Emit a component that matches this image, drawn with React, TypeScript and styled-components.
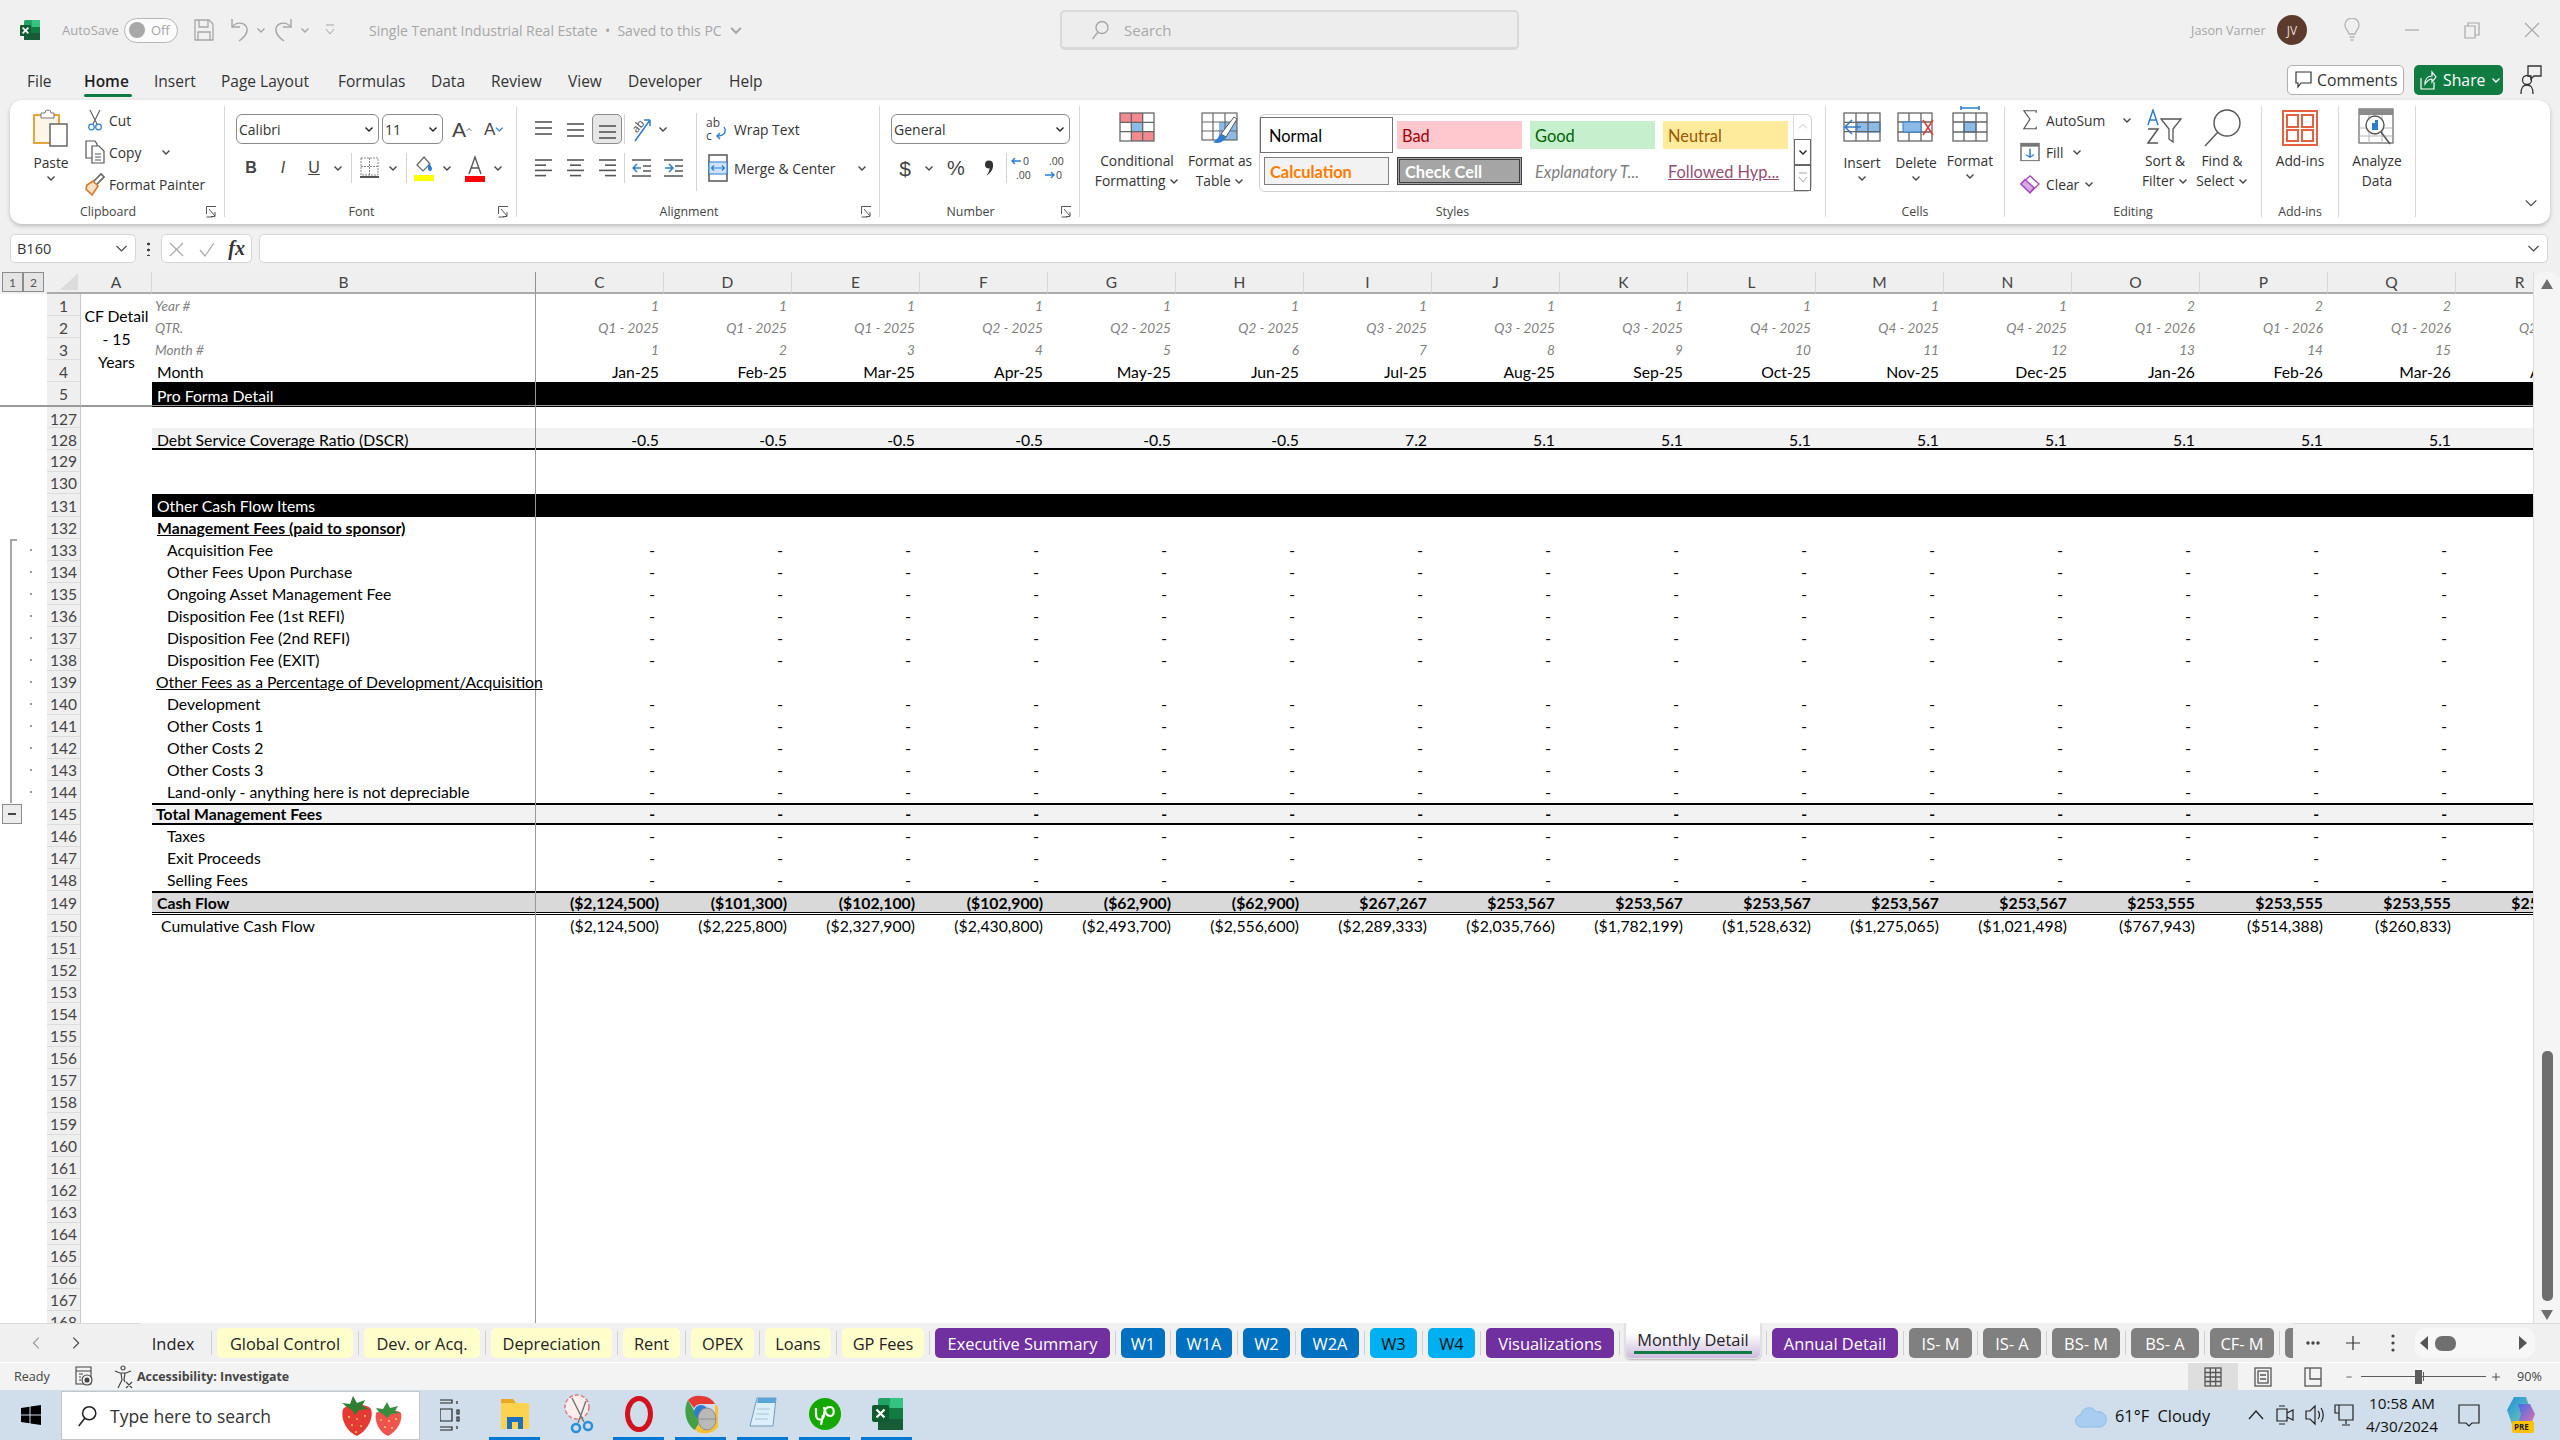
import React from 'react';
import styled, { createGlobalStyle } from 'styled-components';

const UI_FONT = '"Open Sans", "Noto Sans", sans-serif';
const CELL_FONT = 'Lato, "Liberation Sans", sans-serif';

const GlobalStyle = createGlobalStyle`
  html, body { margin: 0; padding: 0; background: #f0f0f0; overflow: hidden; }
  #root { width: 2560px; height: 1440px; }
  * { box-sizing: border-box; }
`;

const Page = styled.div`
  width: 2560px;
  height: 1440px;
  display: flex;
  flex-direction: column;
  background: #f0f0f0;
  font-family: ${UI_FONT};
  color: #333;
  overflow: hidden;
`;

/* ---------- title bar ---------- */
const TitleBar = styled.header`
  height: 60px;
  flex: none;
  display: flex;
  align-items: center;
  color: #a6a6a6;
`;
const TitleLeft = styled.div`
  flex: 0 0 1060px;
  display: flex;
  align-items: center;
`;
const Slot = styled.div<{ $w: number; $ml?: number; $box?: boolean; $h?: number; $left?: boolean }>`
  flex: none;
  width: ${p => p.$w}px;
  height: ${p => (p.$h ? `${p.$h}px` : '100%')};
  margin-left: ${p => p.$ml || 0}px;
  display: flex;
  align-items: center;
  justify-content: ${p => (p.$left ? 'flex-start' : 'center')};
  ${p => p.$box && 'border: 1px solid #8c8c8c; border-radius: 5px; background: #e6e6e6;'}
`;
const AutoSave = styled.span`
  font-size: 13px;
  margin-left: 21px;
  width: 54px;
  white-space: nowrap;
`;
const Toggle = styled.div`
  width: 54px;
  height: 25px;
  margin-left: 8px;
  border: 1.5px solid #b5b5b5;
  border-radius: 13px;
  background: #fbfbfb;
  display: flex;
  align-items: center;
  padding-left: 4px;
  gap: 6px;
  font-size: 13px;
  &::before {
    content: '';
    width: 16px;
    height: 16px;
    border-radius: 50%;
    background: #a8a8a8;
  }
`;
const DocTitle = styled.span`
  margin-left: 33px;
  font-size: 14px;
  white-space: nowrap;
  width: 360px;
`;
const SearchBox = styled.div`
  flex: 0 0 459px;
  height: 40px;
  border: 2px solid #d9d9d9;
  border-bottom-width: 3px;
  border-radius: 5px;
  background: #ededed;
  display: flex;
  align-items: center;
  padding-left: 28px;
  gap: 14px;
  font-size: 15px;
  color: #a9a9a9;
`;
const TitleRight = styled.div`
  flex: 1;
  display: flex;
  align-items: center;
  height: 100%;
`;
const UserName = styled.span`
  margin-left: 672px;
  width: 76px;
  font-size: 12.6px;
  white-space: nowrap;
`;
const Avatar = styled.div`
  width: 30px;
  height: 30px;
  margin-left: 10px;
  border-radius: 50%;
  background: #5c3a2c;
  color: #e6dcd6;
  font-size: 12px;
  display: flex;
  align-items: center;
  justify-content: center;
`;

/* ---------- menu ---------- */
const MenuBar = styled.nav`
  height: 40px;
  flex: none;
  display: flex;
  align-items: center;
  padding-left: 27px;
`;
const MenuItem = styled.div<{ $w: number; $active?: boolean }>`
  flex: none;
  width: ${p => p.$w}px;
  height: 40px;
  font-size: 15.5px;
  line-height: 42px;
  color: ${p => (p.$active ? '#1f1f1f' : '#333')};
  font-weight: ${p => (p.$active ? 600 : 400)};
  white-space: nowrap;
  position: relative;
  ${p =>
    p.$active &&
    `&::after { content: ''; position: absolute; left: 0; bottom: 3px; width: 48px; height: 3px; background: #107c41; border-radius: 2px; }`}
`;
const CommentsBtn = styled.div`
  margin-left: 1518px;
  width: 117px;
  height: 30px;
  border: 1px solid #b0b0b0;
  border-radius: 5px;
  background: #fff;
  display: flex;
  align-items: center;
  gap: 5px;
  padding-left: 7px;
  font-size: 15.8px;
`;
const ShareBtn = styled.div`
  margin-left: 10px;
  width: 89px;
  height: 30px;
  border-radius: 5px;
  background: #107c41;
  color: #fff;
  display: flex;
  align-items: center;
  gap: 6px;
  padding-left: 6px;
  font-size: 15.8px;
`;

/* ---------- ribbon ---------- */
const Ribbon = styled.section`
  flex: none;
  margin-left: 10px;
  width: 2540px;
  height: 124px;
  background: #fff;
  border-radius: 12px;
  box-shadow: 0 2px 4px rgba(0, 0, 0, 0.22);
  display: flex;
  align-items: flex-start;
  padding-top: 6px;
  font-size: 13.8px;
`;
const Group = styled.div<{ $w: number }>`
  flex: none;
  width: ${p => p.$w}px;
  height: 111px;
  display: flex;
  flex-direction: column;
  border-right: 1px solid #d9d9d9;
`;
const GroupBody = styled.div`
  flex: 1;
  display: flex;
  min-height: 0;
`;
const GroupLabel = styled.div<{ $launcher?: boolean }>`
  flex: none;
  height: 18px;
  display: grid;
  grid-template-columns: ${p => (p.$launcher ? '1fr auto 1fr 18px' : '1fr auto 1fr')};
  align-items: center;
  padding-top: 4px;
  font-size: 12.4px;
  color: #444;
  white-space: nowrap;
`;
const Large = styled.div<{ $w: number; $ml?: number }>`
  flex: none;
  width: ${p => p.$w}px;
  margin-left: ${p => p.$ml || 0}px;
  display: flex;
  flex-direction: column;
  align-items: center;
  line-height: 20px;
  text-align: center;
  white-space: nowrap;
`;
const LargeIcon = styled.div<{ $h: number }>`
  height: ${p => p.$h}px;
  display: flex;
  align-items: flex-end;
  justify-content: center;
`;
const LargeText = styled.div<{ $mt: number }>`
  margin-top: ${p => p.$mt}px;
`;
const SmallColumn = styled.div<{ $w: number; $ml?: number }>`
  flex: none;
  width: ${p => p.$w}px;
  margin-left: ${p => p.$ml || 0}px;
  display: flex;
  flex-direction: column;
  gap: 4px;
`;
const SmallRow = styled.div`
  height: 28px;
  display: flex;
  align-items: center;
  white-space: nowrap;
`;
const RowsBlock = styled.div<{ $w?: number }>`
  flex: ${p => (p.$w ? 'none' : 1)};
  width: ${p => (p.$w ? `${p.$w}px` : 'auto')};
  display: flex;
  flex-direction: column;
  gap: 9px;
  padding-top: 8px;
`;
const ToolRow = styled.div`
  height: 30px;
  display: flex;
  align-items: center;
  white-space: nowrap;
`;
const Select = styled.div<{ $w: number; $ml?: number; $size?: number }>`
  flex: none;
  width: ${p => p.$w}px;
  height: 30px;
  margin-left: ${p => p.$ml || 0}px;
  border: 1px solid #8a8a8a;
  border-radius: 6px;
  display: flex;
  align-items: center;
  justify-content: space-between;
  padding: 0 4px 0 2px;
  font-size: ${p => p.$size || 14}px;
`;
const VSep = styled.div<{ $ml?: number; $h?: number }>`
  flex: none;
  width: 1px;
  height: ${p => p.$h || 30}px;
  margin-left: ${p => p.$ml || 0}px;
  background: #d4d4d4;
`;
const TallSep = styled.div`
  flex: none;
  width: 1px;
  height: 78px;
  margin-top: 7px;
  background: #d4d4d4;
`;
const BigGlyph = styled.span<{ $size: number; $bold?: boolean; $italic?: boolean; $color?: string; $line?: string }>`
  font-size: ${p => p.$size}px;
  font-weight: ${p => (p.$bold ? 700 : 400)};
  font-style: ${p => (p.$italic ? 'italic' : 'normal')};
  color: ${p => p.$color || '#444'};
  text-decoration: ${p => p.$line || 'none'};
  font-family: "Liberation Sans", sans-serif;
  line-height: 1;
`;
const Gallery = styled.div`
  flex: none;
  width: 553px;
  height: 78px;
  margin: 8px 0 0 4px;
  border: 1px solid #cfcfcf;
  border-radius: 6px;
  display: flex;
  padding: 6px 0 0 4px;
`;
const StyleGrid = styled.div`
  display: grid;
  grid-template-columns: repeat(4, 125px);
  grid-auto-rows: 28px;
  gap: 8px;
`;
const StyleCell = styled.div<{ $bg?: string; $fg?: string; $bold?: boolean; $italic?: boolean; $under?: boolean; $border?: string }>`
  display: flex;
  align-items: center;
  padding-left: 5px;
  font-family: ${CELL_FONT};
  font-size: 16.4px;
  white-space: nowrap;
  background: ${p => p.$bg || 'transparent'};
  color: ${p => p.$fg || '#000'};
  font-weight: ${p => (p.$bold ? 700 : 400)};
  font-style: ${p => (p.$italic ? 'italic' : 'normal')};
  text-decoration: ${p => (p.$under ? 'underline' : 'none')};
  border: ${p => p.$border || 'none'};
`;
const NormalCell = styled(StyleCell)`
  box-shadow: 0 0 0 3px #fff, 0 0 0 4px #707070;
`;
const GalleryScroll = styled.div`
  margin: -6px 0 0 5px;
  width: 19px;
  display: flex;
  flex-direction: column;
  border-left: 1px solid #dcdcdc;
`;
const GalleryBtn = styled.div<{ $strong?: boolean }>`
  flex: 1;
  display: flex;
  align-items: center;
  justify-content: center;
  ${p => p.$strong && 'border: 1px solid #666; border-right: 1px solid #666; background: #fff;'}
`;
const CollapseCell = styled.div`
  flex: 1;
  height: 111px;
  display: flex;
  align-items: flex-end;
  justify-content: flex-end;
  padding: 0 11px 6px 0;
`;

/* ---------- formula bar ---------- */
const FormulaBar = styled.div`
  flex: none;
  height: 29px;
  margin-top: 10px;
  padding-left: 10px;
  display: flex;
  align-items: center;
`;
const FormulaBox = styled.div<{ $w: number; $ml?: number; $end?: boolean }>`
  flex: none;
  width: ${p => p.$w}px;
  height: 29px;
  margin-left: ${p => p.$ml || 0}px;
  background: #fff;
  border: 1px solid #d6d6d6;
  border-radius: 5px;
  display: flex;
  align-items: center;
  justify-content: ${p => (p.$end ? 'flex-end' : 'space-between')};
  padding: 0 6px;
  font-size: 14.5px;
`;
const FxMark = styled.span`
  font-family: "Liberation Serif", serif;
  font-style: italic;
  font-size: 20px;
  font-weight: 700;
  color: #333;
`;
const DotsV = styled.div`
  width: 3px;
  height: 15px;
  margin-left: 11px;
  background: radial-gradient(circle, #444 1.4px, transparent 1.6px) 0 0 / 3px 6px;
`;

/* ---------- sheet ---------- */
const SheetArea = styled.div`
  flex: none;
  height: 1051px;
  margin-top: 9px;
  display: flex;
`;
const SheetMain = styled.div`
  width: 2534px;
  flex: none;
  display: flex;
  flex-direction: column;
  overflow: hidden;
  background: #fff;
  border-right: 1px solid #dedede;
`;
const HeaderRow = styled.div`
  flex: none;
  height: 22px;
  display: flex;
  background: #fff;
`;
const OutlineBtns = styled.div`
  flex: none;
  width: 47px;
  display: flex;
  padding-left: 2px;
  background: #f0f0f0;
`;
const OutlineBtn = styled.div`
  width: 21px;
  height: 20px;
  border: 1px solid #8c8c8c;
  background: #e4e4e4;
  display: flex;
  align-items: center;
  justify-content: center;
  font-family: ${CELL_FONT};
  font-size: 12px;
  color: #555;
`;
const Corner = styled.div`
  flex: none;
  width: 34px;
  background: #efefef;
  border-bottom: 2px solid #ababab;
  display: flex;
  align-items: flex-end;
  justify-content: flex-end;
  padding: 0 3px 2px 0;
`;
const ColHead = styled.div<{ $w: number; $dark?: boolean }>`
  flex: none;
  width: ${p => p.$w}px;
  background: #efefef;
  border-bottom: 2px solid #ababab;
  border-right: 1px solid ${p => (p.$dark ? '#8f8f8f' : '#d6d6d6')};
  display: flex;
  align-items: center;
  justify-content: center;
  font-family: ${CELL_FONT};
  font-size: 15.5px;
  color: #444;
`;
const SheetGrid = styled.div<{ $rows: string }>`
  flex: 1;
  min-height: 0;
  overflow: hidden;
  display: grid;
  grid-template-columns: 47px 34px 71px 384px repeat(16, 128px);
  grid-template-rows: ${p => p.$rows};
  font-family: ${CELL_FONT};
  font-size: 15.75px;
  color: #000;
`;
const Gutter = styled.div<{ $rule?: boolean }>`
  background: #fff;
  display: flex;
  padding-left: 10px;
  ${p => p.$rule && 'border-bottom: 2px solid #9a9a9a;'}
`;
const Bracket = styled.div<{ $first?: boolean }>`
  flex: 1;
  border-left: 2px solid #a6a6a6;
  ${p => p.$first && 'background: linear-gradient(#a6a6a6, #a6a6a6) 0 0 / 5px 2px no-repeat;'}
  display: flex;
  align-items: center;
  padding-left: 18px;
  &::after {
    content: '';
    width: 2px;
    height: 2px;
    background: #9a9a9a;
  }
`;
const CollapseBtn = styled.div`
  width: 20px;
  height: 20px;
  margin: 1px 0 0 -8px;
  border: 1px solid #8c8c8c;
  background: #ececec;
  display: flex;
  align-items: center;
  justify-content: center;
  &::after {
    content: '';
    width: 8px;
    height: 2px;
    background: #444;
  }
`;
const RowHead = styled.div<{ $rule?: boolean; $drop?: boolean }>`
  background: #efefef;
  border-bottom: ${p => (p.$rule ? '2px solid #9a9a9a' : '1px solid #dcdcdc')};
  border-right: 1px solid #c8c8c8;
  display: flex;
  align-items: center;
  justify-content: center;
  color: #444;
  font-size: 15.5px;
  padding-top: ${p => (p.$drop ? 3 : 1)}px;
`;
const MergedA = styled.div`
  grid-row: span 4;
  display: flex;
  align-items: center;
  justify-content: center;
  text-align: center;
  line-height: 23px;
  padding: 0 1px;
`;
const BlankA = styled.div<{ $rule?: boolean }>`
  ${p => p.$rule && 'border-bottom: 2px solid #9a9a9a;'}
`;
type Kind = 'plain' | 'meta' | 'month' | 'black' | 'sub' | 'total' | 'cash' | 'title' | 'link' | 'section';
const Cell = styled.div<{ $kind: Kind; $pad: number; $pb: number; $right?: boolean; $b?: boolean }>`
  display: flex;
  align-items: flex-end;
  justify-content: ${p => (p.$right ? 'flex-end' : 'flex-start')};
  padding: 0 ${p => (p.$right ? p.$pad : 0)}px ${p => p.$pb}px ${p => (p.$right ? 0 : p.$pad)}px;
  white-space: nowrap;
  min-width: 0;
  line-height: 20px;
  ${p => p.$b && 'border-right: 1px solid #9a9a9a;'}
  ${p => p.$kind === 'meta' && 'font-style: italic; color: #7f7f7f; font-size: 13.6px;'}
  ${p => p.$kind === 'black' && 'background: #000; color: #fff;'}
  ${p => p.$kind === 'section' && 'background: #000; color: #fff; box-shadow: inset 0 -1px 0 #000, inset 0 -2px 0 #9a9a9a;'}
  ${p => p.$kind === 'sub' && 'background: #f2f2f2; box-shadow: inset 0 -2px 0 #000;'}
  ${p => p.$kind === 'total' && 'background: #f2f2f2; box-shadow: inset 0 -2px 0 #000, inset 0 2px 0 #000; font-weight: 700;'}
  ${p => p.$kind === 'cash' && 'background: #d9d9d9; box-shadow: inset 0 2px 0 #000, inset 0 -1px 0 #000, inset 0 -2px 0 #fff, inset 0 -3px 0 #000; font-weight: 700;'}
  ${p => p.$kind === 'title' && 'font-weight: 700; text-decoration: underline;'}
  ${p => p.$kind === 'link' && 'text-decoration: underline;'}
`;
const VScroll = styled.div`
  flex: 1;
  background: #f5f5f5;
  border-radius: 10px 10px 0 0;
  display: flex;
  flex-direction: column;
  align-items: center;
  padding-top: 7px;
`;
const VThumb = styled.div`
  width: 11px;
  height: 250px;
  margin-top: 762px;
  margin-bottom: 9px;
  background: #6e6e6e;
  border-radius: 5px;
`;

/* ---------- sheet tabs ---------- */
const TabStrip = styled.div`
  flex: none;
  height: 40px;
  display: flex;
  align-items: flex-start;
  background: #f0f0f0;
  border-bottom: 1px solid #fff;
`;
const TabNav = styled.div`
  flex: none;
  width: 140px;
  height: 39px;
  display: flex;
  align-items: center;
  padding-left: 29px;
  gap: 23px;
  border-top: 1px solid #dcdcdc;
`;
const Tabs = styled.div`
  flex: none;
  width: 2153px;
  height: 39px;
  display: flex;
  align-items: flex-start;
  overflow: hidden;
`;
const TabSep = styled.div`
  flex: none;
  width: 1px;
  height: 24px;
  margin: 8px 5px 0;
  background: #cfcfcf;
`;
const Tab = styled.div<{ $w: number; $bg?: string; $fg?: string }>`
  flex: none;
  width: ${p => p.$w}px;
  height: 30px;
  margin-top: 5px;
  border-radius: 5px;
  background: ${p => p.$bg || 'transparent'};
  color: ${p => p.$fg || '#222'};
  display: flex;
  align-items: center;
  justify-content: center;
  font-size: 16.4px;
  white-space: nowrap;
`;
const ActiveTab = styled.div<{ $w: number }>`
  flex: none;
  width: ${p => p.$w}px;
  height: 36px;
  border: 1px solid #e2e2e2;
  border-top: none;
  border-radius: 0 0 6px 6px;
  background: linear-gradient(#ffffff 30%, #cdbbdd);
  box-shadow: 0 1px 2px rgba(0, 0, 0, 0.25);
  display: flex;
  flex-direction: column;
  align-items: center;
  padding-top: 6px;
  font-size: 16.4px;
  font-weight: 500;
  color: #242424;
  line-height: 21px;
  white-space: nowrap;
  &::after {
    content: '';
    width: 118px;
    height: 3px;
    margin-top: 1px;
    background: #107c41;
  }
`;
const TabTools = styled.div`
  flex: 1;
  height: 39px;
  display: flex;
  align-items: center;
  border-top: 1px solid #dcdcdc;
`;
const HScroll = styled.div`
  width: 120px;
  height: 30px;
  margin-left: 20px;
  background: #f7f7f7;
  border-radius: 10px;
  display: flex;
  align-items: center;
`;
const HThumb = styled.div`
  width: 21px;
  height: 15px;
  margin-left: 7px;
  border-radius: 7px;
  background: #6f6f6f;
`;

/* ---------- status bar ---------- */
const StatusBar = styled.footer`
  flex: none;
  height: 27px;
  background: #f3f3f3;
  display: flex;
  align-items: center;
  font-size: 12.6px;
  color: #444;
`;
const ReadyText = styled.span`
  margin-left: 14px;
  width: 52px;
`;
const StatusStrong = styled.span`
  font-weight: 700;
  font-size: 12.4px;
  margin-left: 3px;
  width: 2051px;
  white-space: nowrap;
`;
const ViewBtn = styled.div<{ $on?: boolean }>`
  flex: none;
  width: 50px;
  height: 27px;
  background: ${p => (p.$on ? '#dedede' : 'transparent')};
  display: flex;
  align-items: center;
  justify-content: center;
`;
const ZoomTrack = styled.div`
  flex: none;
  width: 125px;
  height: 14px;
  margin-left: 6px;
  display: flex;
  align-items: center;
  background: linear-gradient(#5c5c5c, #5c5c5c) 0 50% / 100% 1px no-repeat;
`;
const ZoomThumb = styled.div`
  width: 7px;
  height: 14px;
  margin-left: 54px;
  background: #5c5c5c;
`;
const ZoomTick = styled.div`
  width: 1px;
  height: 9px;
  margin-left: 1px;
  background: #5c5c5c;
`;
const ZoomValue = styled.span`
  margin-left: 14px;
`;

/* ---------- task bar ---------- */
const TaskBar = styled.footer`
  flex: 1;
  background: #cfdeea;
  display: flex;
  align-items: stretch;
  color: #111;
`;
const StartBtn = styled.div`
  flex: none;
  width: 61px;
  display: flex;
  align-items: center;
  justify-content: center;
`;
const TaskSearch = styled.div`
  flex: none;
  width: 359px;
  margin-top: 1px;
  background: #fff;
  border: 1px solid #c6c6c6;
  display: flex;
  align-items: center;
  padding-left: 14px;
  font-size: 17.5px;
  color: #333;
`;
const TaskSearchText = styled.span`
  margin-left: 12px;
  width: 231px;
`;
const TaskApp = styled.div<{ $ml?: number; $on?: boolean }>`
  flex: none;
  width: 51px;
  margin-left: ${p => p.$ml || 0}px;
  display: flex;
  align-items: center;
  justify-content: center;
  border-bottom: 3px solid ${p => (p.$on ? '#0078d4' : 'transparent')};
`;
const Weather = styled.div`
  margin-left: 1163px;
  width: 165px;
  display: flex;
  align-items: center;
  gap: 8px;
  font-size: 16.4px;
  white-space: nowrap;
  word-spacing: 4px;
`;
const Tray = styled.div<{ $w: number; $ml?: number }>`
  flex: none;
  width: ${p => p.$w}px;
  margin-left: ${p => p.$ml || 0}px;
  display: flex;
  align-items: center;
  justify-content: center;
`;
const Clock = styled.div`
  flex: none;
  width: 84px;
  margin-left: 4px;
  display: flex;
  flex-direction: column;
  align-items: center;
  justify-content: center;
  font-size: 15.2px;
  line-height: 23px;
  white-space: nowrap;
`;

/* ---------- small drawings ---------- */
const Caret = ({ c = '#444', s = 10 }: { c?: string; s?: number }) => (
  <svg width={s} height={s} viewBox="0 0 10 10"><path d="M1.5 3.5 5 7l3.5-3.5" fill="none" stroke={c} strokeWidth="1.4" /></svg>
);
const Chevron = ({ s = 18, c = '#444', d = 'M3 6l6 6 6-6' }: { s?: number; c?: string; d?: string }) => (
  <svg width={s} height={s} viewBox="0 0 18 18"><path d={d} fill="none" stroke={c} strokeWidth="1.3" /></svg>
);
const Launcher = () => (
  <svg width="11" height="12" viewBox="0 0 11 12" fill="none" stroke="#555"><path d="M.5 8V.5H10M3 3l6 7M9 6v4.5H5M.5 11h6" /></svg>
);
const ExcelLogo = () => (
  <svg width="22" height="22" viewBox="0 0 22 22">
    <rect x="5" y="1" width="16" height="20" rx="1.5" fill="#21a366" />
    <rect x="13" y="1" width="8" height="7" fill="#33c481" />
    <rect x="5" y="8" width="16" height="6" fill="#107c41" />
    <rect x="5" y="14" width="16" height="7" fill="#185c37" />
    <rect x="1" y="6" width="11" height="11" rx="1" fill="#0e5c2f" />
    <path d="M3.6 8.7 9.4 14.3M9.4 8.7 3.6 14.3" stroke="#fff" strokeWidth="1.7" />
  </svg>
);
const SaveIcon = () => (
  <svg width="20" height="22" viewBox="0 0 20 22" fill="none" stroke="#a6a6a6" strokeWidth="1.3">
    <path d="M1 1h14l4 4v16H1z" /><path d="M5 1v7h9V1M4 21v-8h12v8" />
  </svg>
);
const UndoIcon = ({ flip }: { flip?: boolean }) => (
  <svg width="19" height="26" viewBox="0 0 19 26" fill="none" stroke="#a6a6a6" strokeWidth="1.4" transform={flip ? 'scale(-1 1)' : undefined}>
    <path d="M2 2v8h8" /><path d="M2 10c4-5 11-5 14-1 3 5 0 10-7 15" />
  </svg>
);
const QatCaret = () => (
  <svg width="12" height="14" viewBox="0 0 12 14" fill="none" stroke="#a6a6a6"><path d="M2 2h8M2 6l4 5 4-5" /></svg>
);
const SearchGlyph = ({ c = '#a6a6a6', s = 20 }: { c?: string; s?: number }) => (
  <svg width={s} height={s} viewBox="0 0 20 20" fill="none" stroke={c} strokeWidth="1.4">
    <circle cx="12" cy="7.5" r="6" /><path d="M8 12 2.5 19" />
  </svg>
);
const Bulb = () => (
  <svg width="16" height="24" viewBox="0 0 16 24" fill="none" stroke="#b4b4b4" strokeWidth="1.3">
    <path d="M5 16c0-3-4-4-4-9a7 7 0 0 1 14 0c0 5-4 6-4 9zM5.5 19h5M6.5 22h3" />
  </svg>
);
const WinCtl = ({ d, c = '#a8a8a8' }: { d: string; c?: string }) => (
  <svg width="18" height="18" viewBox="0 0 18 18" fill="none" stroke={c} strokeWidth="1.2"><path d={d} /></svg>
);
const CommentGlyph = () => (
  <svg width="17" height="18" viewBox="0 0 17 18" fill="none" stroke="#333" strokeWidth="1.2"><path d="M1 1h15v11H6l-3 4v-4H1z" /></svg>
);
const ShareGlyph = () => (
  <svg width="17" height="20" viewBox="0 0 17 20" fill="none" stroke="#fff" strokeWidth="1.2">
    <path d="M1 8v11h13V12M5 14c0-5 3-8 7-8V2l4 5-4 5V9c-3 0-5 2-7 5z" />
  </svg>
);
const CoachGlyph = () => (
  <svg width="22" height="30" viewBox="0 0 22 30" fill="none" stroke="#333" strokeWidth="1.3">
    <circle cx="7" cy="15" r="4.5" /><path d="M1 29c0-7 2-9 6-9s6 2 6 9M8 1h13v10h-7l-3 3v-3H8z" />
  </svg>
);
const PasteIcon = () => (
  <svg width="36" height="38" viewBox="0 0 36 38">
    <rect x="1" y="6" width="25" height="28" fill="#fdf5e6" stroke="#e8a33d" strokeWidth="2" />
    <path d="M8 9V4h4a3 3 0 0 1 6 0h3v5z" fill="#fff" stroke="#777" />
    <rect x="17" y="15" width="17" height="22" fill="#fff" stroke="#666" strokeWidth="1.5" />
  </svg>
);
const CutIcon = () => (
  <svg width="16" height="22" viewBox="0 0 16 22" fill="none" strokeWidth="1.2">
    <path d="M3 1l7 14M13 1 6 15" stroke="#666" />
    <circle cx="4.5" cy="18" r="2.8" stroke="#2b7cd3" /><circle cx="11.5" cy="18" r="2.8" stroke="#2b7cd3" />
  </svg>
);
const CopyIcon = () => (
  <svg width="20" height="24" viewBox="0 0 20 24" fill="#fff" stroke="#555" strokeWidth="1.2">
    <path d="M1 1h9l2 3v14H1z" /><path d="M7 6h7l5 5v12H7z" /><path d="M10 14h6M10 17h6M10 20h6" />
  </svg>
);
const BrushIcon = () => (
  <svg width="20" height="24" viewBox="0 0 20 24" fill="none" strokeWidth="1.6">
    <path d="M8 10l8-8 3 3-8 8z" stroke="#666" />
    <path d="M8 9l5 5-6 9-6-6 1-4z" fill="#fbe3c5" stroke="#d9772a" />
  </svg>
);
const Grow = ({ up }: { up?: boolean }) => (
  <svg width="9" height="7" viewBox="0 0 9 7" fill="none" stroke={up ? '#555' : '#2b7cd3'} strokeWidth="1.3"><path d={up ? 'M1 5.5 4.5 2 8 5.5' : 'M1 1.5 4.5 5 8 1.5'} /></svg>
);
const AlignV = ({ y }: { y: number[] }) => (
  <svg width="19" height="20" viewBox="0 0 19 20" stroke="#555" strokeWidth="1.6">
    {y.map(v => <path key={v} d={`M1 ${v}h17`} />)}
  </svg>
);
const AlignH = ({ rows }: { rows: [number, number][] }) => (
  <svg width="19" height="20" viewBox="0 0 19 20" stroke="#555" strokeWidth="1.6">
    {rows.map(([a, b], i) => <path key={i} d={`M${a} ${2 + i * 5.2}H${b}`} />)}
  </svg>
);
const Indent = ({ out }: { out?: boolean }) => (
  <svg width="20" height="20" viewBox="0 0 20 20" fill="none">
    <path d={out ? 'M1 10h8M5 6l-4 4 4 4' : 'M1 10h8M5 6l4 4-4 4'} stroke="#2b7cd3" strokeWidth="1.5" />
    <path d="M0 2h19M11 8h8M11 13h8M0 18h19" stroke="#555" strokeWidth="1.5" />
  </svg>
);
const Orient = () => (
  <svg width="24" height="30" viewBox="0 0 24 30" fill="none">
    <path d="M6 27 21 6M21 6h-6M21 6v6" stroke="#2b7cd3" strokeWidth="1.5" />
    <text x="3" y="17" fontSize="11" fontFamily="Open Sans" fill="#444" transform="rotate(-50 8 13)">ab</text>
  </svg>
);
const WrapIcon = () => (
  <svg width="23" height="32" viewBox="0 0 23 32" fill="none">
    <text x="1" y="14" fontSize="12" fontFamily="Open Sans" fill="#444">ab</text>
    <text x="1" y="27" fontSize="12" fontFamily="Open Sans" fill="#444">c</text>
    <path d="M19 14c3 5 0 9-7 9M15 20l-3 3 3 3" stroke="#2b7cd3" strokeWidth="1.4" />
  </svg>
);
const MergeIcon = () => (
  <svg width="20" height="30" viewBox="0 0 20 30">
    <rect x="1" y="2" width="18" height="26" fill="#fff" stroke="#555" strokeWidth="1.5" />
    <rect x="1" y="9" width="18" height="12" fill="#cde3f7" stroke="#2b7cd3" />
    <path d="M4 15h12M6 12.5 3.5 15 6 17.5M14 12.5l2.500 2.500L14 17.500" stroke="#2b7cd3" fill="none" strokeWidth="1.2" />
  </svg>
);
const BorderIcon = () => (
  <svg width="19" height="22" viewBox="0 0 19 22" fill="none" stroke="#888" strokeDasharray="2 1">
    <rect x="1" y="1" width="17" height="17" /><path d="M9.500 1v17M1 9.500h17" />
    <path d="M0 20h19" stroke="#555" strokeWidth="2" strokeDasharray="none" />
  </svg>
);
const FillIcon = () => (
  <svg width="20" height="28" viewBox="0 0 20 28">
    <path d="M3 11 10 3l6 7-7 7z" fill="#fff" stroke="#666" strokeWidth="1.2" />
    <path d="M15 9c2 3 3 4 3 6a2 2 0 0 1-4 0c0-2 0-4 1-6z" fill="#2b7cd3" />
    <rect y="21" width="20" height="6" fill="#ffff00" />
  </svg>
);
const FontColor = () => (
  <svg width="20" height="30" viewBox="0 0 20 30">
    <path d="M4 21 10 4l6 17M6 15h8" fill="none" stroke="#555" strokeWidth="1.4" />
    <rect y="23" width="20" height="6" fill="#ff0000" />
  </svg>
);
const CommaIcon = () => (
  <svg width="10" height="16" viewBox="0 0 10 16"><circle cx="5" cy="4.500" r="4" fill="#333" /><path d="M9 4.500C9.500 9 7 13 2.500 15.500 5 12 6 9.500 5.500 6z" fill="#333" /></svg>
);
const DecimalIcon = ({ more }: { more?: boolean }) => (
  <svg width="24" height="32" viewBox="0 0 24 32" fontFamily="Open Sans" fontSize="10.5" fill="#444">
    <text x={more ? 12 : 5} y="13">{more ? '0' : '.00'}</text>
    <text x={more ? 5 : 12} y="27">{more ? '.00' : '0'}</text>
    <path d={more ? 'M10 9H1M4 6 1 9l3 3' : 'M1 23h9M7 20l3 3-3 3'} fill="none" stroke="#2b7cd3" strokeWidth="1.4" />
  </svg>
);
const CellGrid = ({ w, h, cols, rows, children }: { w: number; h: number; cols: number; rows: number; children?: React.ReactNode }) => (
  <svg width={w} height={h} viewBox={`0 0 ${w} ${h}`} fill="none">
    {children}
    <g stroke="#666" strokeWidth="1.3">
      <rect x="1" y="1" width={w - 2} height={h - 2} />
      {Array.from({ length: cols - 1 }, (_, i) => <path key={`c${i}`} d={`M${1 + ((w - 2) * (i + 1)) / cols} 1V${h - 1}`} />)}
      {Array.from({ length: rows - 1 }, (_, i) => <path key={`r${i}`} d={`M1 ${1 + ((h - 2) * (i + 1)) / rows}H${w - 1}`} />)}
    </g>
  </svg>
);
const CondIcon = () => (
  <CellGrid w={36} h={30} cols={3} rows={3}>
    <rect x="1" y="1" width="23" height="10" fill="#f28a8f" />
    <rect x="12" y="11" width="12" height="9" fill="#8dbbe8" />
    <rect x="12" y="20" width="23" height="9" fill="#f28a8f" />
  </CellGrid>
);
const TableIcon = () => (
  <svg width="38" height="36" viewBox="0 0 38 36" fill="none">
    <rect x="18" y="10" width="18" height="18" fill="#8dbbe8" />
    <g stroke="#666" strokeWidth="1.2"><rect x="1" y="1" width="35" height="27" /><path d="M12 1v27M24 1v27M1 10h35M1 19h35" /></g>
    <path d="M20 22 33 5l3 2-11 18z" fill="#fff" stroke="#555" />
    <path d="M19 22c-2 4-3 6-7 8 4 2 11 1 12-5z" fill="#2b7cd3" />
  </svg>
);
const InsertIcon = () => (
  <CellGrid w={38} h={30} cols={3} rows={3}>
    <rect x="14" y="10" width="23" height="10" fill="#8dbbe8" stroke="#2b7cd3" />
    <path d="M18 15H2M9 8l-7 7 7 7" stroke="#2b7cd3" strokeWidth="1.6" />
  </CellGrid>
);
const DeleteIcon = () => (
  <svg width="38" height="30" viewBox="0 0 38 30" fill="none">
    <g stroke="#666" strokeWidth="1.3"><rect x="1" y="1" width="34" height="28" /><path d="M12 1v28M24 1v28M1 10h34M1 20h34" /></g>
    <rect x="6" y="10" width="18" height="10" fill="#8dbbe8" stroke="#2b7cd3" />
    <path d="M26 8l10 15M36 8 26 23" stroke="#e03a3a" strokeWidth="1.5" />
  </svg>
);
const FormatIcon = () => (
  <svg width="36" height="36" viewBox="0 0 36 36" fill="none">
    <path d="M9 2h18M9 0v4M27 0v4" stroke="#2b7cd3" strokeWidth="1.6" />
    <rect x="12" y="16" width="12" height="10" fill="#8dbbe8" stroke="#2b7cd3" />
    <g stroke="#666" strokeWidth="1.3"><rect x="1" y="7" width="34" height="28" /><path d="M12 7v28M24 7v28M1 16h34M1 26h34" /></g>
  </svg>
);
const SigmaIcon = () => (
  <svg width="16" height="20" viewBox="0 0 18 30" preserveAspectRatio="none" fill="none" stroke="#555" strokeWidth="1.4"><path d="M16 4V1H2l7 13-7 14h14v-3" /></svg>
);
const FillDown = () => (
  <svg width="20" height="20" viewBox="0 0 20 30" preserveAspectRatio="none" fill="none">
    <rect x="1" y="2" width="18" height="26" fill="#fff" stroke="#666" strokeWidth="1.4" />
    <rect x="1" y="2" width="18" height="5" fill="#777" />
    <path d="M10 10v13M6 19l4 4 4-4" stroke="#2b7cd3" strokeWidth="1.5" />
  </svg>
);
const Eraser = () => (
  <svg width="20" height="22" viewBox="0 0 20 30" preserveAspectRatio="none" fill="none" stroke="#a347ba" strokeWidth="1.6">
    <path d="M10 4l9 11-9 12-9-12z" /><path d="M5 9l9 11-4 7-9-12z" fill="#d8a9e2" />
  </svg>
);
const SortIcon = () => (
  <svg width="38" height="36" viewBox="0 0 38 36" fill="none">
    <path d="M2 16 7 1l5 15M4 11h6" stroke="#2b7cd3" strokeWidth="1.5" />
    <path d="M2 20h10L2 34h10" stroke="#555" strokeWidth="1.5" />
    <path d="M15 10h20l-8 10v13l-4-3V20z" stroke="#555" strokeWidth="1.3" />
  </svg>
);
const FindIcon = () => (
  <svg width="38" height="38" viewBox="0 0 38 38" fill="none" stroke="#555" strokeWidth="1.4">
    <circle cx="24" cy="14" r="13" /><path d="M15 23 2 37" />
  </svg>
);
const AddinsIcon = () => (
  <svg width="36" height="36" viewBox="0 0 36 36" fill="none" stroke="#e3613f" strokeWidth="2">
    <rect x="1" y="1" width="34" height="34" /><rect x="5" y="5" width="11" height="12" /><rect x="20" y="5" width="11" height="12" /><rect x="5" y="20" width="11" height="11" /><rect x="20" y="20" width="11" height="11" />
  </svg>
);
const AnalyzeIcon = () => (
  <svg width="38" height="38" viewBox="0 0 38 38" fill="none">
    <rect x="1" y="1" width="34" height="34" stroke="#666" strokeWidth="1.2" />
    <rect x="1" y="1" width="34" height="6" fill="#8a8a8a" />
    <path d="M1 20h34M1 28h34M11 7v28M24 7v28" stroke="#b5b5b5" />
    <circle cx="17" cy="17" r="9" fill="#fff" stroke="#555" strokeWidth="1.4" />
    <path d="M14 15h3v7h-3zM17 12h3v10h-3z" fill="#2b7cd3" />
    <path d="M23 24l9 12" stroke="#555" strokeWidth="1.6" />
  </svg>
);
const RecordIcon = () => (
  <svg width="19" height="21" viewBox="0 0 19 21" fill="none" stroke="#444" strokeWidth="1.1">
    <path d="M1 1h15v17H1zM1 5h15M4 8h4M4 11h2M4 14h2" /><circle cx="12" cy="14" r="5" fill="#f3f3f3" /><circle cx="12" cy="14" r="2" fill="#444" />
  </svg>
);
const AccessIcon = () => (
  <svg width="20" height="24" viewBox="0 0 20 24" fill="none" stroke="#444" strokeWidth="1.2">
    <circle cx="9" cy="3" r="2" /><path d="M1 6l5 2h6l5-2M7 8l1 7-4 8M11 8l-1 7 1 2M12 17l6 6M18 17l-6 6" />
  </svg>
);
const ViewGrid = () => (
  <svg width="18" height="20" viewBox="0 0 18 20" fill="none" stroke="#555" strokeWidth="1.3"><rect x="1" y="1" width="16" height="18" /><path d="M6.300 1v18M11.700 1v18M1 5.500h16M1 10h16M1 14.500h16" /></svg>
);
const ViewPage = () => (
  <svg width="18" height="20" viewBox="0 0 18 20" fill="none" stroke="#555" strokeWidth="1.3"><rect x="1" y="1" width="16" height="18" /><rect x="4" y="4" width="10" height="12" /><path d="M6 8h6M6 12h6" /></svg>
);
const ViewBreak = () => (
  <svg width="18" height="20" viewBox="0 0 18 20" fill="none" stroke="#555" strokeWidth="1.3"><rect x="1" y="1" width="16" height="18" /><path d="M6 1v11h11" /></svg>
);
const WinLogo = () => (
  <svg width="20" height="20" viewBox="0 0 20 20" fill="#000"><path d="M0 3l8.500-1.200v7.700H0zM9.500 1.600 20 0v9.500H9.500zM0 10.500h8.500v7.700L0 17zM9.500 10.500H20V20L9.500 18.400z" /></svg>
);
const Strawberries = () => (
  <svg width="62" height="42" viewBox="0 0 62 42">
    <path d="M2 14c5-6 24-6 28 0 3 8-3 22-14 27C6 37-1 24 2 14z" fill="#e53935" />
    <path d="M35 18c4-4 22-4 25 0 2 8-4 18-13 23-8-3-14-14-12-23z" fill="#ef5350" />
    <path d="M6 12 1 8l8 1 3-8 4 7 8-3-3 6 7 3-10 1-4 5-3-5z" fill="#2e7d32" />
    <path d="M38 17l-3-4 7 1 4-7 3 6 8-2-3 5 5 2-9 1-4 4-4-4z" fill="#388e3c" />
    <g fill="#ffd54f">
      <circle cx="8" cy="22" r="1" /><circle cx="16" cy="24" r="1" /><circle cx="24" cy="21" r="1" /><circle cx="11" cy="30" r="1" /><circle cx="20" cy="31" r="1" /><circle cx="15" cy="37" r="1" />
      <circle cx="40" cy="25" r="1" /><circle cx="48" cy="26" r="1" /><circle cx="55" cy="24" r="1" /><circle cx="44" cy="32" r="1" /><circle cx="51" cy="33" r="1" />
    </g>
  </svg>
);
const TaskView = () => (
  <svg width="20" height="32" viewBox="0 0 20 32" fill="none" stroke="#222" strokeWidth="1.2"><path d="M0 1h12v3H0M0 10h12v12H0zM0 28h12v3H0M17 2v3M17 11h2v4h-2zM17 18h2v4h-2zM17 27v3" /></svg>
);
const Explorer = () => (
  <svg width="28" height="34" viewBox="0 0 28 34">
    <path d="M0 2h12l3 4H0z" fill="#e8a820" />
    <rect y="6" width="28" height="26" fill="#fcd24f" />
    <path d="M6 32V20h16v12h-5v-7h-6v7z" fill="#1f6fc0" />
  </svg>
);
const Snip = () => (
  <svg width="30" height="42" viewBox="0 0 30 42" fill="none">
    <circle cx="13" cy="14" r="12" fill="#fdeeee" stroke="#e07878" strokeWidth="1.5" strokeDasharray="4 2" />
    <path d="M8 5l12 24M22 8 14 30" stroke="#777" strokeWidth="1.5" />
    <circle cx="12" cy="35" r="4" stroke="#2b8fd8" strokeWidth="2.500" /><circle cx="24" cy="33" r="4" stroke="#2b8fd8" strokeWidth="2.500" />
  </svg>
);
const Opera = () => (
  <svg width="28" height="36" viewBox="0 0 28 36" fill="none"><ellipse cx="14" cy="18" rx="11.500" ry="15.500" stroke="#d2121d" strokeWidth="5" /></svg>
);
const Chrome = () => (
  <svg width="34" height="40" viewBox="0 0 34 40">
    <path d="M17 2a16 16 0 0 1 14 8H17a8 8 0 0 0-7 4L4 6a16 16 0 0 1 13-4z" fill="#e53935" />
    <path d="M4 6l7 12 6 8-6 10C3 32-2 17 4 6z" fill="#43a047" />
    <path d="M31 10a16 16 0 0 1-20 26l6-10h14z" fill="#fbc02d" />
    <circle cx="17" cy="18" r="7" fill="#2b7cd3" />
    <ellipse cx="23" cy="25" rx="9" ry="11" fill="#b9b9b9" stroke="#8f8f8f" />
    <path d="M14 25h18" stroke="#8f8f8f" />
  </svg>
);
const Notepad = () => (
  <svg width="28" height="36" viewBox="0 0 28 36">
    <path d="M8 2h19l-3 28H1z" fill="#dbeefa" stroke="#6f9cc0" />
    <path d="M9 2h18l-1 5H8z" fill="#59a5d8" />
    <path d="M8 13h13M7 18h13M6 23h13" stroke="#a8c6db" />
  </svg>
);
const Upwork = () => (
  <svg width="34" height="34" viewBox="0 0 34 34" fill="none">
    <circle cx="17" cy="17" r="16" fill="#14a800" />
    <path d="M8 11v7c0 6 8 6 8 0 0-5 2-8 6-8 5 0 5 9 0 9-3 0-5-3-6-9M15 18l-2 10" stroke="#fff" strokeWidth="2.200" />
  </svg>
);
const ExcelTask = () => (
  <svg width="32" height="34" viewBox="0 0 32 34">
    <rect x="7" y="1" width="25" height="32" rx="2" fill="#21a366" />
    <rect x="19" y="1" width="13" height="10" fill="#33c481" />
    <rect x="7" y="11" width="25" height="11" fill="#107c41" />
    <rect x="7" y="22" width="25" height="11" fill="#185c37" />
    <rect x="1" y="8" width="17" height="17" rx="2" fill="#0e5c2f" />
    <path d="M5.500 12.500l8 8M13.500 12.500l-8 8" stroke="#fff" strokeWidth="2.200" />
  </svg>
);
const Cloud = () => (
  <svg width="32" height="26" viewBox="0 0 32 26">
    <path d="M7 25a6 6 0 0 1-1-12 8 8 0 0 1 15-3 7 7 0 0 1 5 15z" fill="#a9cdf1" stroke="#8ebcea" />
  </svg>
);
const TrayIcon = ({ d, w = 22, h = 26 }: { d: string; w?: number; h?: number }) => (
  <svg width={w} height={h} viewBox={`0 0 ${w} ${h}`} fill="none" stroke="#222" strokeWidth="1.2"><path d={d} /></svg>
);
const Copilot = () => (
  <svg width="30" height="38" viewBox="0 0 30 38">
    <defs>
      <linearGradient id="cpA" x1="0" y1="0" x2="1" y2="1"><stop offset="0" stopColor="#1f8fe0" /><stop offset="1" stopColor="#7ad0a8" /></linearGradient>
      <linearGradient id="cpB" x1="0" y1="0" x2="1" y2="1"><stop offset="0" stopColor="#3f6fe8" /><stop offset="1" stopColor="#e86fb0" /></linearGradient>
    </defs>
    <path d="M8 1h12l5 14-6 13H6L1 14z" fill="url(#cpA)" />
    <path d="M12 8h12l5 10-4 10H12l3-10z" fill="url(#cpB)" />
    <rect x="6" y="25" width="22" height="12" rx="2" fill="#ffc107" />
    <text x="8" y="34" fontSize="8" fontWeight="700" fontFamily="Open Sans" fill="#222">PRE</text>
  </svg>
);

/* ---------- data ---------- */
const colLetters = 'CDEFGHIJKLMNOPQR'.split('');
const menu: [string, number][] = [
  ['File', 57], ['Home', 70], ['Insert', 67], ['Page Layout', 117], ['Formulas', 93],
  ['Data', 60], ['Review', 77], ['View', 60], ['Developer', 101], ['Help', 40],
];
const months = ['Jan-25', 'Feb-25', 'Mar-25', 'Apr-25', 'May-25', 'Jun-25', 'Jul-25', 'Aug-25', 'Sep-25', 'Oct-25', 'Nov-25', 'Dec-25', 'Jan-26', 'Feb-26', 'Mar-26', 'Apr-26'];
const quarters = months.map((_, i) => (i < 12 ? `Q${Math.floor(i / 3) + 1} - 2025` : `Q${Math.floor((i - 12) / 3) + 1} - 2026`));
const years = months.map((_, i) => (i < 12 ? '1' : '2'));
const monthNums = months.map((_, i) => String(i + 1));
const dscr = ['-0.5', '-0.5', '-0.5', '-0.5', '-0.5', '-0.5', '7.2', '5.1', '5.1', '5.1', '5.1', '5.1', '5.1', '5.1', '5.1', ''];
const cashFlow = ['($2,124,500)', '($101,300)', '($102,100)', '($102,900)', '($62,900)', '($62,900)', '$267,267', '$253,567', '$253,567', '$253,567', '$253,567', '$253,567', '$253,555', '$253,555', '$253,555', '$253,555'];
const cumulative = ['($2,124,500)', '($2,225,800)', '($2,327,900)', '($2,430,800)', '($2,493,700)', '($2,556,600)', '($2,289,333)', '($2,035,766)', '($1,782,199)', '($1,528,632)', '($1,275,065)', '($1,021,498)', '($767,943)', '($514,388)', '($260,833)', ''];
const dashes = months.map((_, i) => (i < 15 ? '-' : ''));

type RowSpec = {
  n: number;
  h: number;
  kind: Kind;
  label?: string;
  pad?: number;
  pb?: number;
  values?: string[];
  valuePad?: number;
  outline?: 'first' | 'mid' | 'collapse';
  freeze?: boolean;
};

const feeRow = (n: number, label: string, first?: boolean): RowSpec => ({
  n, h: 22, kind: 'plain', label, pad: 15, values: dashes, valuePad: 9, outline: first ? 'first' : 'mid',
});
const plainRow = (n: number): RowSpec => ({ n, h: 22, kind: 'plain' });

const rows: RowSpec[] = [
  { n: 1, h: 22, kind: 'meta', label: 'Year #', pad: 3, values: years, valuePad: 5 },
  { n: 2, h: 22, kind: 'meta', label: 'QTR.', pad: 3, values: quarters, valuePad: 5 },
  { n: 3, h: 22, kind: 'meta', label: 'Month #', pad: 3, values: monthNums, valuePad: 5 },
  { n: 4, h: 22, kind: 'plain', label: 'Month', pad: 5, values: months, valuePad: 5 },
  { n: 5, h: 25, kind: 'section', label: 'Pro Forma Detail', pad: 5, pb: 1, freeze: true },
  { n: 127, h: 21, kind: 'plain' },
  { n: 128, h: 22, kind: 'sub', label: 'Debt Service Coverage Ratio (DSCR)', pad: 5, values: dscr, valuePad: 5 },
  plainRow(129),
  plainRow(130),
  { n: 131, h: 23, kind: 'black', label: 'Other Cash Flow Items', pad: 5 },
  { n: 132, h: 22, kind: 'title', label: 'Management Fees (paid to sponsor)', pad: 5 },
  feeRow(133, 'Acquisition Fee', true),
  feeRow(134, 'Other Fees Upon Purchase'),
  feeRow(135, 'Ongoing Asset Management Fee'),
  feeRow(136, 'Disposition Fee (1st REFI)'),
  feeRow(137, 'Disposition Fee (2nd REFI)'),
  feeRow(138, 'Disposition Fee (EXIT)'),
  { n: 139, h: 22, kind: 'link', label: 'Other Fees as a Percentage of Development/Acquisition', pad: 4, outline: 'mid' },
  feeRow(140, 'Development'),
  feeRow(141, 'Other Costs 1'),
  feeRow(142, 'Other Costs 2'),
  feeRow(143, 'Other Costs 3'),
  feeRow(144, 'Land-only - anything here is not depreciable'),
  { n: 145, h: 22, kind: 'total', label: 'Total Management Fees', pad: 4, values: dashes, valuePad: 9, outline: 'collapse' },
  { n: 146, h: 22, kind: 'plain', label: 'Taxes', pad: 15, values: dashes, valuePad: 9 },
  { n: 147, h: 22, kind: 'plain', label: 'Exit Proceeds', pad: 15, values: dashes, valuePad: 9 },
  { n: 148, h: 22, kind: 'plain', label: 'Selling Fees', pad: 15, values: dashes, valuePad: 9 },
  { n: 149, h: 24, kind: 'cash', label: 'Cash Flow', pad: 5, pb: 2, values: cashFlow, valuePad: 5 },
  { n: 150, h: 22, kind: 'plain', label: 'Cumulative Cash Flow', pad: 9, values: cumulative, valuePad: 5 },
  ...Array.from({ length: 18 }, (_, i) => plainRow(151 + i)),
];

const yellowTabs: [string, number][] = [['Global Control', 136], ['Dev. or Acq.', 116], ['Depreciation', 121], ['Rent', 57], ['OPEX', 63], ['Loans', 66], ['GP Fees', 82]];
const leftTabs: [string, number, string, string][] = [
  ['Executive Summary', 175, '#7030a0', '#fff'], ['W1', 44, '#0070c0', '#fff'], ['W1A', 56, '#0070c0', '#fff'],
  ['W2', 47, '#0070c0', '#fff'], ['W2A', 58, '#0070c0', '#fff'], ['W3', 47, '#00b0f0', '#111'], ['W4', 47, '#00b0f0', '#111'],
  ['Visualizations', 128, '#7030a0', '#fff'],
];
const rightTabs: [string, number, string, string][] = [
  ['Annual Detail', 126, '#7030a0', '#fff'], ['IS- M', 63, '#808080', '#fff'], ['IS- A', 58, '#808080', '#fff'],
  ['BS- M', 68, '#808080', '#fff'], ['BS- A', 68, '#808080', '#fff'], ['CF- M', 64, '#808080', '#fff'], ['', 40, '#808080', '#fff'],
];

const SheetRows = () => (
  <SheetGrid $rows={rows.map(r => `${r.h}px`).join(' ')}>
    {rows.map(r => {
      const pb = r.pb ?? (r.n <= 128 ? 0 : 1);
      return (
        <React.Fragment key={r.n}>
          <Gutter $rule={r.freeze}>
            {r.outline === 'first' && <Bracket $first />}
            {r.outline === 'mid' && <Bracket />}
            {r.outline === 'collapse' && <CollapseBtn />}
          </Gutter>
          <RowHead $rule={r.freeze} $drop={r.n <= 128 && r.n !== 5}>{r.n}</RowHead>
          {r.n === 1 && <MergedA>CF Detail<br />- 15<br />Years</MergedA>}
          {r.n > 4 && <BlankA $rule={r.freeze} />}
          <Cell $kind={r.kind} $pad={r.pad || 0} $pb={pb} $b>{r.label}</Cell>
          {months.map((_, i) => (
            <Cell
              key={i}
              $kind={r.kind === 'title' || r.kind === 'link' ? 'plain' : r.kind}
              $pad={r.valuePad || 0}
              $pb={pb}
              $right
            >
              {r.values ? r.values[i] : null}
            </Cell>
          ))}
        </React.Fragment>
      );
    })}
  </SheetGrid>
);

const App = () => (
  <Page>
    <GlobalStyle />
    <TitleBar>
      <TitleLeft>
        <Slot $w={22} $ml={19}><ExcelLogo /></Slot>
        <AutoSave>AutoSave</AutoSave>
        <Toggle>Off</Toggle>
        <Slot $w={20} $ml={16}><SaveIcon /></Slot>
        <Slot $w={19} $ml={16}><UndoIcon /></Slot>
        <Slot $w={10} $ml={7}><Caret c="#a6a6a6" /></Slot>
        <Slot $w={19} $ml={8}><UndoIcon flip /></Slot>
        <Slot $w={10} $ml={7}><Caret c="#a6a6a6" /></Slot>
        <Slot $w={12} $ml={14}><QatCaret /></Slot>
        <DocTitle>Single Tenant Industrial Real Estate&nbsp; •&nbsp; Saved to this PC</DocTitle>
        <Caret c="#a6a6a6" s={14} />
      </TitleLeft>
      <SearchBox><SearchGlyph />Search</SearchBox>
      <TitleRight>
        <UserName>Jason Varner</UserName>
        <Avatar>JV</Avatar>
        <Slot $w={16} $ml={37}><Bulb /></Slot>
        <Slot $w={18} $ml={43}><WinCtl d="M2 9h14" /></Slot>
        <Slot $w={18} $ml={42}><WinCtl d="M2 5h10v12H2zM5 5V2h11v12h-4" /></Slot>
        <Slot $w={18} $ml={42}><WinCtl d="M2 2l14 14M16 2 2 16" /></Slot>
      </TitleRight>
    </TitleBar>

    <MenuBar>
      {menu.map(([label, w]) => (
        <MenuItem key={label} $w={w} $active={label === 'Home'}>{label}</MenuItem>
      ))}
      <CommentsBtn><CommentGlyph />Comments</CommentsBtn>
      <ShareBtn><ShareGlyph />Share<Caret c="#fff" /></ShareBtn>
      <Slot $w={22} $ml={17} $h={30}><CoachGlyph /></Slot>
    </MenuBar>

    <Ribbon>
      <Group $w={215}>
        <GroupBody>
          <Large $w={66} $ml={8}>
            <LargeIcon $h={41}><PasteIcon /></LargeIcon>
            <LargeText $mt={6}>Paste</LargeText>
            <Caret />
          </Large>
          <SmallColumn $w={130} $ml={1}>
            <SmallRow><Slot $w={20}><CutIcon /></Slot><Slot $w={34} $ml={4} $left>Cut</Slot></SmallRow>
            <SmallRow><Slot $w={20}><CopyIcon /></Slot><Slot $w={38} $ml={4} $left>Copy</Slot><Slot $w={10} $ml={14}><Caret /></Slot></SmallRow>
            <SmallRow><Slot $w={20}><BrushIcon /></Slot><Slot $w={100} $ml={4} $left>Format Painter</Slot></SmallRow>
          </SmallColumn>
        </GroupBody>
        <GroupLabel $launcher><span /><span>Clipboard</span><span /><Launcher /></GroupLabel>
      </Group>

      <Group $w={292}>
        <RowsBlock>
          <ToolRow>
            <Select $w={143} $ml={11}>Calibri<Caret c="#222" /></Select>
            <Select $w={61} $ml={3}>11<Caret c="#222" /></Select>
            <Slot $w={20} $ml={9}><BigGlyph $size={21}>A</BigGlyph><Grow up /></Slot>
            <Slot $w={20} $ml={12}><BigGlyph $size={17}>A</BigGlyph><Grow /></Slot>
          </ToolRow>
          <ToolRow>
            <Slot $w={22} $ml={15}><BigGlyph $size={16} $bold>B</BigGlyph></Slot>
            <Slot $w={22} $ml={10}><BigGlyph $size={16} $italic>I</BigGlyph></Slot>
            <Slot $w={22} $ml={9}><BigGlyph $size={16} $line="underline">U</BigGlyph></Slot>
            <Slot $w={10} $ml={8}><Caret /></Slot>
            <VSep $ml={8} />
            <Slot $w={20} $ml={7}><BorderIcon /></Slot>
            <Slot $w={10} $ml={9}><Caret /></Slot>
            <VSep $ml={8} />
            <Slot $w={20} $ml={7}><FillIcon /></Slot>
            <Slot $w={10} $ml={8}><Caret /></Slot>
            <Slot $w={20} $ml={13}><FontColor /></Slot>
            <Slot $w={10} $ml={8}><Caret /></Slot>
          </ToolRow>
        </RowsBlock>
        <GroupLabel $launcher><span /><span>Font</span><span /><Launcher /></GroupLabel>
      </Group>

      <Group $w={363}>
        <GroupBody>
          <RowsBlock $w={179}>
            <ToolRow>
              <Slot $w={24} $ml={14}><AlignV y={[3, 9, 15]} /></Slot>
              <Slot $w={24} $ml={8}><AlignV y={[5, 11, 17]} /></Slot>
              <Slot $w={30} $ml={5} $box><AlignV y={[7, 13, 19]} /></Slot>
              <VSep $ml={2} />
              <Slot $w={24} $ml={4}><Orient /></Slot>
              <Slot $w={12} $ml={4}><Caret /></Slot>
            </ToolRow>
            <ToolRow>
              <Slot $w={24} $ml={14}><AlignH rows={[[1, 18], [1, 12], [1, 18], [1, 12]]} /></Slot>
              <Slot $w={24} $ml={8}><AlignH rows={[[1, 18], [4, 15], [1, 18], [4, 15]]} /></Slot>
              <Slot $w={24} $ml={8}><AlignH rows={[[1, 18], [7, 18], [1, 18], [7, 18]]} /></Slot>
              <VSep $ml={5} />
              <Slot $w={24} $ml={5}><Indent out /></Slot>
              <Slot $w={24} $ml={8}><Indent /></Slot>
            </ToolRow>
          </RowsBlock>
          <TallSep />
          <RowsBlock>
            <ToolRow><Slot $w={23} $ml={8}><WrapIcon /></Slot><Slot $w={80} $ml={6} $left>Wrap Text</Slot></ToolRow>
            <ToolRow><Slot $w={20} $ml={11}><MergeIcon /></Slot><Slot $w={112} $ml={6} $left>Merge &amp; Center</Slot><Slot $w={10} $ml={11}><Caret /></Slot></ToolRow>
          </RowsBlock>
        </GroupBody>
        <GroupLabel $launcher><span /><span>Alignment</span><span /><Launcher /></GroupLabel>
      </Group>

      <Group $w={200}>
        <RowsBlock>
          <ToolRow><Select $w={179} $ml={11}>General<Caret c="#222" /></Select></ToolRow>
          <ToolRow>
            <Slot $w={20} $ml={15}><BigGlyph $size={21}>$</BigGlyph></Slot>
            <Slot $w={12} $ml={8}><Caret /></Slot>
            <Slot $w={24} $ml={9}><BigGlyph $size={20}>%</BigGlyph></Slot>
            <Slot $w={20} $ml={11}><CommaIcon /></Slot>
            <VSep $ml={7} />
            <Slot $w={26} $ml={3}><DecimalIcon more /></Slot>
            <Slot $w={26} $ml={7}><DecimalIcon /></Slot>
          </ToolRow>
        </RowsBlock>
        <GroupLabel $launcher><span /><span>Number</span><span /><Launcher /></GroupLabel>
      </Group>

      <Group $w={746}>
        <GroupBody>
          <Large $w={96} $ml={9}>
            <LargeIcon $h={36}><CondIcon /></LargeIcon>
            <LargeText $mt={9}>Conditional</LargeText>
            <div>Formatting <Caret /></div>
          </Large>
          <Large $w={70}>
            <LargeIcon $h={42}><TableIcon /></LargeIcon>
            <LargeText $mt={3}>Format as</LargeText>
            <div>Table <Caret /></div>
          </Large>
          <Gallery>
            <StyleGrid>
              <NormalCell $bg="#fff">Normal</NormalCell>
              <StyleCell $bg="#ffc7ce" $fg="#9c0006">Bad</StyleCell>
              <StyleCell $bg="#c6efce" $fg="#006100">Good</StyleCell>
              <StyleCell $bg="#ffeb9c" $fg="#9c5700">Neutral</StyleCell>
              <StyleCell $bg="#f2f2f2" $fg="#fa7d00" $bold $border="1px solid #7f7f7f">Calculation</StyleCell>
              <StyleCell $bg="#a5a5a5" $fg="#fff" $bold $border="3px double #3f3f3f">Check Cell</StyleCell>
              <StyleCell $fg="#7f7f7f" $italic>Explanatory T...</StyleCell>
              <StyleCell $fg="#954f72" $under>Followed Hyp...</StyleCell>
            </StyleGrid>
            <GalleryScroll>
              <GalleryBtn><Chevron s={12} c="#bbb" d="M3 11l6-6 6 6" /></GalleryBtn>
              <GalleryBtn $strong><Caret c="#222" /></GalleryBtn>
              <GalleryBtn $strong><QatCaret /></GalleryBtn>
            </GalleryScroll>
          </Gallery>
        </GroupBody>
        <GroupLabel><span /><span>Styles</span><span /></GroupLabel>
      </Group>

      <Group $w={179}>
        <GroupBody>
          <Large $w={54} $ml={9}>
            <LargeIcon $h={36}><InsertIcon /></LargeIcon>
            <LargeText $mt={11}>Insert</LargeText>
            <Caret />
          </Large>
          <Large $w={54}>
            <LargeIcon $h={36}><DeleteIcon /></LargeIcon>
            <LargeText $mt={11}>Delete</LargeText>
            <Caret />
          </Large>
          <Large $w={54}>
            <LargeIcon $h={36}><FormatIcon /></LargeIcon>
            <LargeText $mt={9}>Format</LargeText>
            <Caret />
          </Large>
        </GroupBody>
        <GroupLabel><span /><span>Cells</span><span /></GroupLabel>
      </Group>

      <Group $w={257}>
        <GroupBody>
          <SmallColumn $w={117} $ml={15}>
            <SmallRow><Slot $w={20}><SigmaIcon /></Slot><Slot $w={76} $ml={6} $left>AutoSum</Slot><Slot $w={10}><Caret /></Slot></SmallRow>
            <SmallRow><Slot $w={20}><FillDown /></Slot><Slot $w={26} $ml={6} $left>Fill</Slot><Caret /></SmallRow>
            <SmallRow><Slot $w={20}><Eraser /></Slot><Slot $w={38} $ml={6} $left>Clear</Slot><Caret /></SmallRow>
          </SmallColumn>
          <Large $w={56}>
            <LargeIcon $h={39}><SortIcon /></LargeIcon>
            <LargeText $mt={6}>Sort &amp;</LargeText>
            <div>Filter <Caret /></div>
          </Large>
          <Large $w={58}>
            <LargeIcon $h={41}><FindIcon /></LargeIcon>
            <LargeText $mt={4}>Find &amp;</LargeText>
            <div>Select <Caret /></div>
          </Large>
        </GroupBody>
        <GroupLabel><span /><span>Editing</span><span /></GroupLabel>
      </Group>

      <Group $w={77}>
        <GroupBody>
          <Large $w={76}>
            <LargeIcon $h={40}><AddinsIcon /></LargeIcon>
            <LargeText $mt={5}>Add-ins</LargeText>
          </Large>
        </GroupBody>
        <GroupLabel><span /><span>Add-ins</span><span /></GroupLabel>
      </Group>

      <Group $w={77}>
        <GroupBody>
          <Large $w={76}>
            <LargeIcon $h={40}><AnalyzeIcon /></LargeIcon>
            <LargeText $mt={5}>Analyze</LargeText>
            <div>Data</div>
          </Large>
        </GroupBody>
      </Group>
      <CollapseCell><Chevron s={16} /></CollapseCell>
    </Ribbon>

    <FormulaBar>
      <FormulaBox $w={126}>B160<Chevron s={15} /></FormulaBox>
      <DotsV />
      <FormulaBox $w={91} $ml={11}>
        <WinCtl d="M2 3l13 13M15 3 2 16" />
        <WinCtl d="M2 10l5 6L16 3" />
        <FxMark>fx</FxMark>
      </FormulaBox>
      <FormulaBox $w={2289} $ml={7} $end><Chevron s={15} /></FormulaBox>
    </FormulaBar>

    <SheetArea>
      <SheetMain>
        <HeaderRow>
          <OutlineBtns><OutlineBtn>1</OutlineBtn><OutlineBtn>2</OutlineBtn></OutlineBtns>
          <Corner>
            <svg width="18" height="17" viewBox="0 0 18 17"><path d="M18 0v17H0z" fill="#dcdcdc" /></svg>
          </Corner>
          <ColHead $w={71}>A</ColHead>
          <ColHead $w={384} $dark>B</ColHead>
          {colLetters.map(c => <ColHead key={c} $w={128}>{c}</ColHead>)}
        </HeaderRow>
        <SheetRows />
      </SheetMain>
      <VScroll>
        <svg width="12" height="10" viewBox="0 0 12 10"><path d="M6 0l6 10H0z" fill="#6f6f6f" /></svg>
        <VThumb />
        <svg width="12" height="10" viewBox="0 0 12 10"><path d="M6 10 0 0h12z" fill="#6f6f6f" /></svg>
      </VScroll>
    </SheetArea>

    <TabStrip>
      <TabNav>
        <Chevron s={16} c="#999" d="M11 3 5 9l6 6" />
        <Chevron s={16} c="#444" d="M6 3l6 6-6 6" />
      </TabNav>
      <Tabs>
        <Tab $w={66}>Index</Tab>
        <TabSep />
        {yellowTabs.map(([label, w]) => (
          <React.Fragment key={label}><Tab $w={w} $bg="#ffffcc">{label}</Tab><TabSep /></React.Fragment>
        ))}
        {leftTabs.map(([label, w, bg, fg]) => (
          <React.Fragment key={label}><Tab $w={w} $bg={bg} $fg={fg}>{label}</Tab><TabSep /></React.Fragment>
        ))}
        <ActiveTab $w={136}>Monthly Detail</ActiveTab>
        <TabSep />
        {rightTabs.map(([label, w, bg, fg]) => (
          <React.Fragment key={label + w}><Tab $w={w} $bg={bg} $fg={fg}>{label}</Tab><TabSep /></React.Fragment>
        ))}
      </Tabs>
      <TabTools>
        <Slot $w={16} $ml={12}>
          <svg width="14" height="4" viewBox="0 0 14 4" fill="#444"><circle cx="2" cy="2" r="1.700" /><circle cx="7" cy="2" r="1.700" /><circle cx="12" cy="2" r="1.700" /></svg>
        </Slot>
        <Slot $w={18} $ml={23}><WinCtl c="#333" d="M9 2v14M2 9h14" /></Slot>
        <Slot $w={4} $ml={29}>
          <svg width="4" height="18" viewBox="0 0 4 18" fill="#444"><circle cx="2" cy="2" r="1.600" /><circle cx="2" cy="9" r="1.600" /><circle cx="2" cy="16" r="1.600" /></svg>
        </Slot>
        <HScroll>
          <Slot $w={8} $ml={5}><svg width="8" height="14" viewBox="0 0 8 14"><path d="M8 0v14L0 7z" fill="#555" /></svg></Slot>
          <HThumb />
          <Slot $w={8} $ml={63}><svg width="8" height="14" viewBox="0 0 8 14"><path d="M0 0v14l8-7z" fill="#555" /></svg></Slot>
        </HScroll>
      </TabTools>
    </TabStrip>

    <StatusBar>
      <ReadyText>Ready</ReadyText>
      <Slot $w={20} $ml={8}><RecordIcon /></Slot>
      <Slot $w={20} $ml={20}><AccessIcon /></Slot>
      <StatusStrong>Accessibility: Investigate</StatusStrong>
      <ViewBtn $on><ViewGrid /></ViewBtn>
      <ViewBtn><ViewPage /></ViewBtn>
      <ViewBtn><ViewBreak /></ViewBtn>
      <Slot $w={12} $ml={5}><WinCtl c="#444" d="M5 9h8" /></Slot>
      <ZoomTrack><ZoomThumb /><ZoomTick /></ZoomTrack>
      <Slot $w={14} $ml={3}><WinCtl c="#444" d="M9 4v10M4 9h10" /></Slot>
      <ZoomValue>90%</ZoomValue>
    </StatusBar>

    <TaskBar>
      <StartBtn><WinLogo /></StartBtn>
      <TaskSearch>
        <SearchGlyph c="#222" s={22} />
        <TaskSearchText>Type here to search</TaskSearchText>
        <Strawberries />
      </TaskSearch>
      <Tray $w={20} $ml={20}><TaskView /></Tray>
      <TaskApp $ml={29} $on><Explorer /></TaskApp>
      <TaskApp $ml={13}><Snip /></TaskApp>
      <TaskApp $ml={9} $on><Opera /></TaskApp>
      <TaskApp $ml={11} $on><Chrome /></TaskApp>
      <TaskApp $ml={11} $on><Notepad /></TaskApp>
      <TaskApp $ml={11} $on><Upwork /></TaskApp>
      <TaskApp $ml={11} $on><ExcelTask /></TaskApp>
      <Weather><Cloud />61°F Cloudy</Weather>
      <Tray $w={20} $ml={6}><Chevron s={18} c="#222" d="M2 13l7-8 7 8" /></Tray>
      <Tray $w={22} $ml={8}><TrayIcon d="M3 7h10v12H3zM13 11l6-3v10l-6-3M5 4h6M5 22h6" /></Tray>
      <Tray $w={22} $ml={8}><TrayIcon d="M2 9h4l5-5v18l-5-5H2zM14 9c2 2 2 6 0 8M17 6c3 4 3 10 0 14" /></Tray>
      <Tray $w={22} $ml={8}><TrayIcon d="M1 3h18v15H5v-15M5 3H1v8h4M12 18v4M8 23h8" /></Tray>
      <Clock>
        <div>10:58 AM</div>
        <div>4/30/2024</div>
      </Clock>
      <Tray $w={22} $ml={14}><TrayIcon d="M1 3h20v18h-7l-3 3-3-3H1z" /></Tray>
      <Tray $w={30} $ml={26}><Copilot /></Tray>
    </TaskBar>
  </Page>
);

export default App;
